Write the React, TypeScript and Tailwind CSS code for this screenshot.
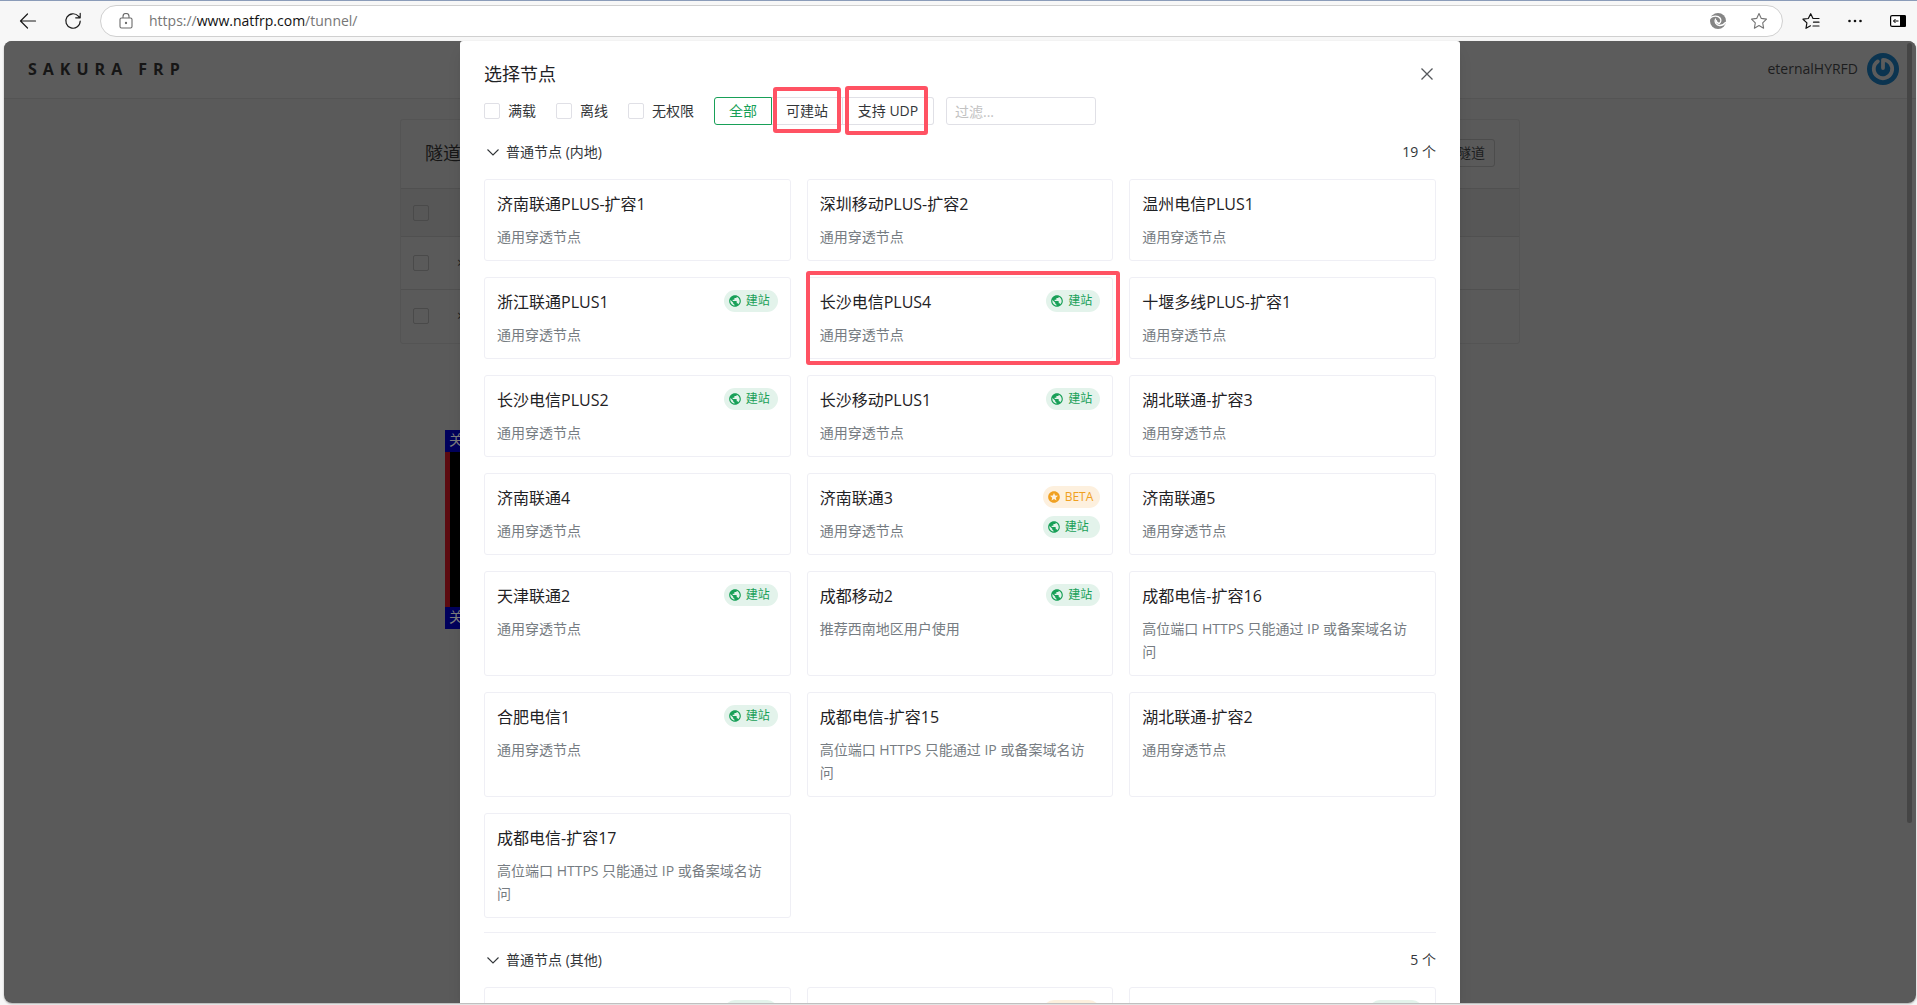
import React, { useState } from "react";
import { MdAdd, MdPublic, MdStars } from "react-icons/md";

type Tag = "site" | "beta";
type TunnelNode = { name: string; desc: string; tags?: Tag[] };

const GENERAL = "通用穿透节点";
const HIGH_PORT = "高位端口 HTTPS 只能通过 IP 或备案域名访问";

const MAINLAND: TunnelNode[] = [
  { name: "济南联通PLUS-扩容1", desc: GENERAL },
  { name: "深圳移动PLUS-扩容2", desc: GENERAL },
  { name: "温州电信PLUS1", desc: GENERAL },
  { name: "浙江联通PLUS1", desc: GENERAL, tags: ["site"] },
  { name: "长沙电信PLUS4", desc: GENERAL, tags: ["site"] },
  { name: "十堰多线PLUS-扩容1", desc: GENERAL },
  { name: "长沙电信PLUS2", desc: GENERAL, tags: ["site"] },
  { name: "长沙移动PLUS1", desc: GENERAL, tags: ["site"] },
  { name: "湖北联通-扩容3", desc: GENERAL },
  { name: "济南联通4", desc: GENERAL },
  { name: "济南联通3", desc: GENERAL, tags: ["beta", "site"] },
  { name: "济南联通5", desc: GENERAL },
  { name: "天津联通2", desc: GENERAL, tags: ["site"] },
  { name: "成都移动2", desc: "推荐西南地区用户使用", tags: ["site"] },
  { name: "成都电信-扩容16", desc: HIGH_PORT },
  { name: "合肥电信1", desc: GENERAL, tags: ["site"] },
  { name: "成都电信-扩容15", desc: HIGH_PORT },
  { name: "湖北联通-扩容2", desc: GENERAL },
  { name: "成都电信-扩容17", desc: HIGH_PORT },
];

const OTHER: TunnelNode[] = [
  { name: "", desc: "", tags: ["site"] },
  { name: "", desc: "", tags: ["beta"] },
  { name: "", desc: "", tags: ["site"] },
];

const HIGHLIGHTED = "长沙电信PLUS4";

function TagPill({ tag }: { tag: Tag }) {
  if (tag === "beta") {
    return (
      <span className="flex h-[22px] items-center gap-1 rounded-full bg-[#fdf0de] pl-1 pr-[7px] text-xs text-[#f0a020]">
        <MdStars size={14} />
        BETA
      </span>
    );
  }
  return (
    <span className="flex h-[22px] items-center gap-1 rounded-full bg-[#e3f3eb] pl-1 pr-2 text-xs text-[#18a058]">
      <MdPublic size={14} />
      建站
    </span>
  );
}

function NodeCard({ node }: { node: TunnelNode }) {
  return (
    <div className="relative flex min-h-[82px] items-start rounded-[3px] border border-[#efeff5] p-3">
      <div className="min-w-0 flex-1">
        <h3 className="text-base leading-6 text-[#1f2225]">{node.name}</h3>
        <p className="mt-[9px] pr-2 text-sm leading-[23px] text-[#767c82]">{node.desc}</p>
      </div>
      {node.tags && (
        <div className="flex flex-col gap-2">
          {node.tags.map((t) => (
            <TagPill key={t} tag={t} />
          ))}
        </div>
      )}
      {node.name === HIGHLIGHTED && (
        <span className="pointer-events-none absolute -bottom-[7px] -left-[2px] -right-[8px] -top-[7px] rounded-[3px] border-4 border-[#ff5263]" />
      )}
    </div>
  );
}

function Section({ title, count, nodes }: { title: string; count: number; nodes: TunnelNode[] }) {
  return (
    <section>
      <button type="button" className="flex w-full items-center text-sm leading-[22px] text-[#333639]">
        <svg viewBox="0 0 16 16" className="ml-[1px] mr-[5px] size-4" fill="none" stroke="currentColor" strokeWidth="1.1">
          <path d="M2.500 5.500 8 11l5.500-5.500" />
        </svg>
        <span>{title}</span>
        <span className="ml-auto">{count} 个</span>
      </button>
      <div className="mt-4 grid grid-cols-3 gap-4">
        {nodes.map((n, i) => (
          <NodeCard key={i} node={n} />
        ))}
      </div>
    </section>
  );
}

function FilterCheck({ label }: { label: string }) {
  return (
    <label className="mr-5 flex items-center gap-2 text-sm text-[#333639]">
      <input type="checkbox" className="size-4 appearance-none rounded-[2px] border border-[#e0e0e6] bg-white" />
      {label}
    </label>
  );
}

function NodeDialog() {
  const [filter, setFilter] = useState("");
  return (
    <div role="dialog" aria-label="选择节点" className="h-full w-[1000px] max-w-full overflow-hidden rounded-t-[3px] bg-white px-6 pt-[21px] shadow-lg">
      <header className="flex h-6 items-center justify-between">
        <h2 className="text-lg leading-6 text-[#1f2225]">选择节点</h2>
        <button type="button" aria-label="关闭" className="flex size-[18px] items-center justify-center text-[#55585c]">
          <svg viewBox="0 0 18 18" className="size-[18px]" fill="none" stroke="currentColor" strokeWidth="1.3">
            <path d="m3.500 3.500 11 11m0-11-11 11" />
          </svg>
        </button>
      </header>

      <div className="mt-[11px] flex h-7 items-center">
        <FilterCheck label="满载" />
        <FilterCheck label="离线" />
        <FilterCheck label="无权限" />
        <div className="flex text-sm text-[#333639]">
          <button type="button" className="h-7 w-[58px] rounded-l-[3px] border border-[#18a058] text-[#18a058]">
            全部
          </button>
          <span className="relative">
            <button type="button" className="h-7 w-[71px] border border-l-0 border-[#e0e0e6]">
              可建站
            </button>
            <span className="pointer-events-none absolute -bottom-2 -top-[10px] left-[1px] right-[2px] rounded-[3px] border-4 border-[#ff5263]" />
          </span>
          <span className="relative">
            <button type="button" className="h-7 w-[91px] rounded-r-[3px] border border-l-0 border-[#e0e0e6]">
              支持 UDP
            </button>
            <span className="pointer-events-none absolute -bottom-[10px] -top-[11px] left-[2px] right-[6px] rounded-[3px] border-4 border-[#ff5263]" />
          </span>
        </div>
        <input
          type="text"
          aria-label="过滤"
          placeholder="过滤..."
          value={filter}
          onChange={(e) => setFilter(e.target.value)}
          className="ml-3 h-7 w-[150px] rounded-[3px] border border-[#e0e0e6] px-2 text-sm text-[#333639] placeholder:text-[#c2c2c2]"
        />
      </div>

      <div className="mt-4">
        <Section title="普通节点 (内地)" count={19} nodes={MAINLAND} />
        <hr className="mb-4 mt-[14px] border-[#efeff5]" />
        <Section title="普通节点 (其他)" count={5} nodes={OTHER} />
      </div>
    </div>
  );
}

function DimCheckbox({ label }: { label: string }) {
  return <input type="checkbox" aria-label={label} className="block size-4 appearance-none rounded-[2px] border border-[#4a4a4a]" />;
}

function TunnelPage() {
  return (
    <div className="h-full bg-[#5a5a5a]">
      <header className="flex h-[58px] items-center justify-between border-b border-[#545454] bg-[#5c5c5c] pb-[2px] pl-6 pr-[17px]">
        <span className="text-base font-bold tracking-[6px] text-[#161616]">SAKURA FRP</span>
        <span className="flex items-center gap-[9px] text-sm text-[#1c1d1e]">
          eternalHYRFD
          <svg viewBox="0 0 32 32" className="size-8">
            <circle cx="16" cy="16" r="16" fill="#0b3450" />
            <path
              d="M10.800 8.400A9.200 9.200 0 1 0 16 6.800V15"
              fill="none"
              stroke="#5c5c5c"
              strokeWidth="3.800"
              strokeLinecap="round"
              strokeLinejoin="round"
            />
          </svg>
        </span>
      </header>

      <main className="mx-auto mt-5 w-[1120px] max-w-full rounded-[3px] border border-[#545454]">
        <div className="flex h-[68px] items-center justify-between px-6 pb-[2px]">
          <h1 className="text-lg text-[#161616]">隧道</h1>
          <button type="button" className="flex h-7 items-center gap-1 rounded-[3px] border border-[#4c4c4c] px-[9px] text-sm text-[#1c1d1e]">
            <MdAdd size={16} />
            隧道
          </button>
        </div>
        <table className="w-full text-left text-sm text-[#1c1d1e]">
          <thead>
            <tr className="h-12 border-t border-[#505050] bg-[#575757]">
              <th className="w-11 pl-3"><DimCheckbox label="全选" /></th>
              <th />
            </tr>
          </thead>
          <tbody>
            {["a", "b"].map((k) => (
              <tr key={k} className="h-[53px] border-t border-[#505050]">
                <td className="w-11 pl-3"><DimCheckbox label="选择隧道" /></td>
                <td className="pl-3">×</td>
              </tr>
            ))}
          </tbody>
        </table>
      </main>

      <div className="mx-auto mt-[86px] w-[1030px]">
        <aside className="w-[800px] text-sm text-[#7b7b7b]">
          <div className="h-[22px] bg-[#00005c] px-1">关闭</div>
          <div className="h-[155px] border-l-[5px] border-[#5c0a10] bg-black" />
          <div className="h-[22px] bg-[#00005c] px-1">关闭</div>
        </aside>
      </div>
    </div>
  );
}

function BrowserBar() {
  return (
    <div className="flex h-[41px] shrink-0 items-center border-t border-[#8b9cb9] bg-[#f7f7f7] pl-[18px] pr-[11px]">
      <button type="button" aria-label="后退" className="mr-[26px]">
        <svg viewBox="0 0 20 20" className="size-5" fill="none" stroke="#1b1b1b" strokeWidth="1.200" strokeLinecap="round" strokeLinejoin="round">
          <path d="M17.500 10H2.500M9.500 3l-7 7 7 7" />
        </svg>
      </button>
      <button type="button" aria-label="刷新" className="mr-[18px]">
        <svg viewBox="0 0 20 20" className="size-[18px]" fill="none" stroke="#1b1b1b" strokeWidth="1.300" strokeLinecap="round" strokeLinejoin="round">
          <path d="M18 10a8 8 0 1 1-2-5.300L17.800 6.300M18 1.500v5h-5" />
        </svg>
      </button>
      <div className="flex h-8 flex-1 items-center rounded-full border border-[#d0d0d0] bg-white pl-[18px] pr-[14px]">
        <svg viewBox="0 0 14 16" className="mr-4 h-4 w-[14px]" fill="none" stroke="#6b6b6b" strokeWidth="1.100">
          <rect x="1" y="5" width="12" height="10" rx="1.500" />
          <path d="M4 5V3.500a3 3 0 0 1 6 0V5" />
          <circle cx="7" cy="10" r="0.600" fill="#6b6b6b" />
        </svg>
        <a href="#" className="text-sm text-[#767676]">
          https://<span className="text-[#111]">www.natfrp.com</span>/tunnel/
        </a>
        <span className="ml-auto flex items-center gap-6">
          <svg viewBox="0 0 16 16" className="size-4">
            <circle cx="8" cy="8" r="8" fill="#858585" />
            <g fill="none" stroke="#fff" strokeLinecap="round">
              <path d="M0 5.200C2.800 2.800 7.800 2.200 10 5c1.500 2 .8 4.300-.8 5.500" strokeWidth="1.300" />
              <path d="M5.600 6c-1.500 3 .7 6.300 4 6.500 2.500.1 4.600-1.200 5.900-3" strokeWidth="1.300" />
              <path d="M6.300 7.800c.2 1.700 1.500 2.600 2.900 2.400" strokeWidth="1.600" />
            </g>
          </svg>
          <svg viewBox="0 0 18 18" className="size-[18px]" fill="none" stroke="#747474" strokeWidth="1.100" strokeLinejoin="round">
            <path d="m9 1.500 2.300 4.900 5.200.7-3.800 3.700.9 5.400L9 13.600l-4.600 2.600.9-5.400L1.500 7.100l5.200-.7Z" />
          </svg>
        </span>
      </div>
      <div className="ml-[19px] flex items-center gap-[27px]">
        <svg viewBox="0 0 18 18" className="size-[18px]" fill="none" stroke="#111" strokeWidth="1.200" strokeLinecap="round" strokeLinejoin="round">
          <path d="M13.500 6.500H11L8.700 1.700 6.300 6.500 1 7.200l3.900 3.700-.9 5.400 4.500-2.500M11 6.500h6M11.500 10.200H17M11 14h6" />
        </svg>
        <svg viewBox="0 0 16 16" className="size-4" fill="#111">
          <circle cx="2.500" cy="8" r="1.300" />
          <circle cx="8" cy="8" r="1.300" />
          <circle cx="13.500" cy="8" r="1.300" />
        </svg>
        <svg viewBox="0 0 16 12" className="h-3 w-4">
          <rect x="0.600" y="0.600" width="14.800" height="10.800" rx="1.500" fill="#fff" stroke="#000" strokeWidth="1.200" />
          <path d="M10 0h4.500A1.500 1.500 0 0 1 16 1.500v9a1.500 1.500 0 0 1-1.500 1.500H10Z" />
          <path d="M8.500 6h-5m2-2-2 2 2 2" fill="none" stroke="#000" />
        </svg>
      </div>
    </div>
  );
}

export default function App() {
  return (
    <div
      className="flex h-screen flex-col bg-[#f7f7f7]"
      style={{ fontFamily: '"Open Sans", "Noto Sans CJK SC", sans-serif' }}
    >
      <BrowserBar />
      <div className="relative mb-[2px] ml-1 mr-[1px] min-h-0 flex-1 overflow-hidden rounded-lg shadow-[0_1px_2px_rgba(0,0,0,0.3)]">
        <TunnelPage />
        <div className="absolute inset-0 flex justify-center">
          <NodeDialog />
        </div>
        <div className="absolute right-1 top-[2px] h-[780px] w-[5px] rounded-full bg-[#454545]" />
      </div>
    </div>
  );
}
